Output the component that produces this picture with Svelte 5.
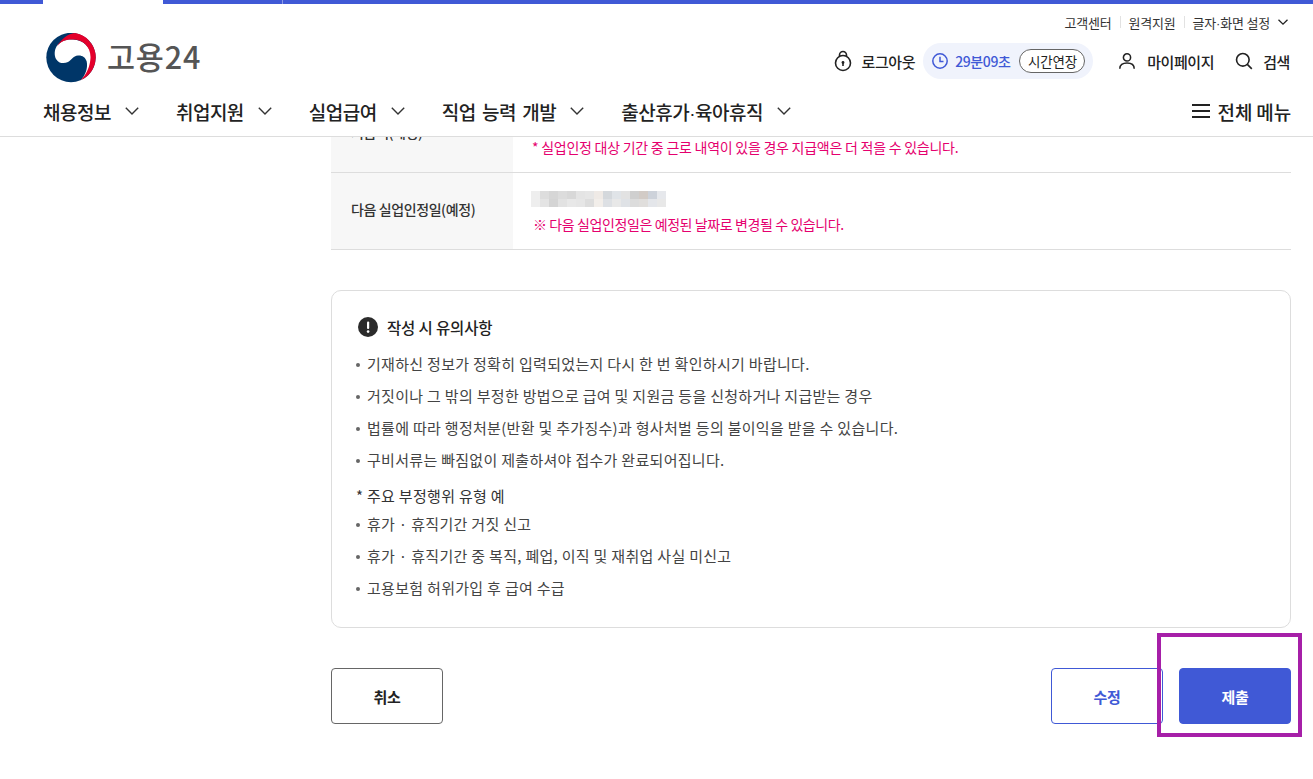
<script lang="ts">
  const gnb = [
    ["채용정보"],
    ["취업지원"],
    ["실업급여"],
    ["직업 능력 개발"],
    ["출산휴가", "육아휴직"],
  ];
  const notes = [
    "기재하신 정보가 정확히 입력되었는지 다시 한 번 확인하시기 바랍니다.",
    "거짓이나 그 밖의 부정한 방법으로 급여 및 지원금 등을 신청하거나 지급받는 경우",
    "법률에 따라 행정처분(반환 및 추가징수)과 형사처벌 등의 불이익을 받을 수 있습니다.",
    "구비서류는 빠짐없이 제출하셔야 접수가 완료되어집니다.",
  ];
  const frauds = [
    "휴가 · 휴직기간 거짓 신고",
    "휴가 · 휴직기간 중 복직, 폐업, 이직 및 재취업 사실 미신고",
    "고용보험 허위가입 후 급여 수급",
  ];
  // blurred date, two rows of mosaic cells
  const blur = [
    "#eee", "#ddd", "#d6d6d6", "#dcdcdc", "#d8d8d8", "#e4e4e4", "#e6e6e6", "#efeae6", "#d4d8dc", "#e0e4e8", "#e2e2e2", "#cfcfcf", "#d2cbc6", "#cdd2da", "#e6e8ec",
    "#eee", "#e4e4e4", "#d4d4d4", "#e2e2e2", "#e8e8e8", "#e6e6e6", "#dddddd", "#f2eeea", "#dde0e4", "#e8e8e8", "#dfe2e6", "#dcdcdc", "#e0dedc", "#e4e6ea", "#e8e8e8",
  ];
</script>

<div class="page">
  <header class="header">
    <div class="topline">
      <span class="seg s1"></span>
      <span class="seg s2"></span>
      <span class="seg s3"></span>
      <span class="seg s4"></span>
    </div>
    <div class="util">
      <a href="#a">고객센터</a>
      <i></i>
      <a href="#a">원격지원</a>
      <i></i>
      <a href="#a">글자<span class="dot">·</span>화면 설정</a>
      <svg width="12" height="12" viewBox="0 0 12 12" fill="none" stroke="#222" stroke-width="1.3"><path d="M1.5 3.8 6 8.2l4.5-4.4" /></svg>
    </div>
    <div class="brand-row">
      <div class="logo">
        <svg width="50" height="50" viewBox="0 0 50 50">
          <circle cx="25" cy="24.500" r="24.700" fill="#003668" />
          <path d="M10.500 13.500C14 8 20 6 27 6.500C37 7 45 14 45.500 24C46 34 41 43 34.700 47.500C39.500 42 42 35 40.700 28.500C39.500 24 35.500 22 32 22.500C27 23 25.500 27 22 29C18 31 12.500 30.500 10 26C8 22 8.500 17 10.500 13.500Z" fill="#fff" />
          <path d="M11 13.500C15 6.500 22 .500 29 .100A24.700 24.700 0 0 1 34.700 47.200C41 41 44 33 44.500 25C45 14 37 6.500 27 6.500C20 6 14.500 8.500 11 13.500Z" fill="#e4002b" />
        </svg>
        <span class="logo-text">고용24</span>
      </div>
      <div class="user-tools">
        <a class="tool logout" href="#a">
          <svg width="18" height="22" viewBox="0 0 18 22" fill="none" stroke="#222" stroke-width="1.600">
            <circle cx="9" cy="13" r="7.500" />
            <path d="M5.500 6.500V5a3.500 3.500 0 0 1 7 0v1.500" />
            <circle cx="9" cy="12.500" r="1.400" fill="#222" stroke="none" />
            <path d="M9 13v3" />
          </svg>
          로그아웃
        </a>
        <div class="session">
          <svg width="18" height="18" viewBox="0 0 18 18" fill="none" stroke="#4059d6" stroke-width="1.500">
            <circle cx="9" cy="9" r="7.200" />
            <path d="M9 4.800V9.500h3.500" />
          </svg>
          <span class="time">29분09초</span>
          <button class="extend">시간연장</button>
        </div>
        <a class="tool mypage" href="#a">
          <svg width="18" height="18" viewBox="0 0 20 20" fill="none" stroke="#222" stroke-width="1.700">
            <circle cx="10" cy="6" r="4" />
            <path d="M2 18.500c0-4 3-6.300 8-6.300s8 2.300 8 6.300" />
          </svg>
          마이페이지
        </a>
        <a class="tool search" href="#a">
          <svg width="18" height="18" viewBox="0 0 20 20" fill="none" stroke="#222" stroke-width="1.800">
            <circle cx="8.700" cy="8.700" r="7" />
            <path d="m13.700 13.700 5 5" />
          </svg>
          검색
        </a>
      </div>
    </div>
    <nav class="gnb">
      <ul>
        {#each gnb as parts}
          <li>
            <span>
              {#each parts as part, i}{#if i > 0}<span class="dot">·</span>{/if}{part}{/each}
            </span>
            <svg width="16" height="16" viewBox="0 0 16 16" fill="none" stroke="#333" stroke-width="1.400"><path d="M1.800 4.800 8 11l6.200-6.200" /></svg>
          </li>
        {/each}
      </ul>
      <a class="allmenu" href="#a">
        <svg width="18" height="14" viewBox="0 0 18 14" fill="#222"><rect y="0" width="18" height="2" /><rect y="6" width="18" height="2" /><rect y="12" width="18" height="2" /></svg>
        전체 메뉴
      </a>
    </nav>
  </header>

  <main class="content">
    <div class="info-table">
      <div class="row row-cut">
        <div class="th">지급액(예정)</div>
        <div class="td"><p class="warn">* 실업인정 대상 기간 중 근로 내역이 있을 경우 지급액은 더 적을 수 있습니다.</p></div>
      </div>
      <div class="row row-next">
        <div class="th">다음 실업인정일(예정)</div>
        <div class="td">
          <div class="mosaic">
            {#each blur as c}
              <span style="background:{c}"></span>
            {/each}
          </div>
          <p class="warn">※ 다음 실업인정일은 예정된 날짜로 변경될 수 있습니다.</p>
        </div>
      </div>
    </div>

    <section class="notice">
      <h3>
        <svg width="20" height="20" viewBox="0 0 20 20">
          <circle cx="10" cy="10" r="10" fill="#2b2b2b" />
          <rect x="9" y="4.500" width="2.200" height="7.500" rx="1" fill="#fff" />
          <circle cx="10.100" cy="14.600" r="1.300" fill="#fff" />
        </svg>
        작성 시 유의사항
      </h3>
      <ul>
        {#each notes as n}
          <li>{n}</li>
        {/each}
      </ul>
      <p class="sub">* 주요 부정행위 유형 예</p>
      <ul class="fraud">
        {#each frauds as n}
          <li>{n}</li>
        {/each}
      </ul>
    </section>

    <div class="actions">
      <button class="btn cancel">취소</button>
      <div class="right">
        <button class="btn edit">수정</button>
        <button class="btn submit">제출</button>
      </div>
    </div>
  </main>

  <div class="highlight"></div>
</div>

<style>
  :global(body) {
    font-family: "Noto Sans CJK KR", "Noto Sans", sans-serif;
    color: #222;
    background: #fff;
  }
  .page {
    position: relative;
    height: 779px;
    overflow: hidden;
  }
  a {
    color: inherit;
    text-decoration: none;
  }
  .dot {
    font-family: "Liberation Sans", sans-serif;
  }
  .header {
    height: 137px;
    box-sizing: border-box;
    border-bottom: 1px solid #ddd;
    position: relative;
    z-index: 2;
    background: #fff;
  }
  .topline {
    display: flex;
    height: 4px;
  }
  .seg {
    display: block;
    background: #4059d6;
  }
  .s1 { width: 43px; }
  .s2 { width: 120px; background: #fff; }
  .s3 { width: 119px; border-right: 1px solid #8c9ae6; }
  .s4 { flex: 1; }
  .util {
    display: flex;
    justify-content: flex-end;
    align-items: center;
    gap: 8px;
    height: 16px;
    margin-top: 10px;
    padding-right: 24px;
    font-size: 13px;
    letter-spacing: -0.2px;
    color: #333;
  }
  .util i {
    width: 1px;
    height: 12px;
    background: #e2e2e2;
  }
  .util svg {
    margin-left: -1px;
  }
  .brand-row {
    display: flex;
    justify-content: space-between;
    align-items: flex-start;
    height: 55px;
    padding: 3px 23px 0 46px;
    box-sizing: border-box;
  }
  .logo {
    display: flex;
    align-items: center;
    gap: 12px;
  }
  .logo-text {
    font-size: 30.500px;
    font-weight: 500;
    line-height: 1;
    color: #555;
    letter-spacing: 0.8px;
    margin-top: -4px;
    margin-left: -1px;
  }
  .user-tools {
    display: flex;
    align-items: center;
    margin-top: 10px;
    font-size: 15px;
    font-weight: 500;
    letter-spacing: -0.4px;
  }
  .tool {
    display: flex;
    align-items: center;
    gap: 10px;
  }
  .logout {
    margin-right: 8px;
  }
  .session {
    display: flex;
    align-items: center;
    width: 170px;
    height: 36px;
    box-sizing: border-box;
    padding: 0 6px 0 8px;
    border-radius: 18px;
    background: #f0f3fc;
  }
  .time {
    margin-left: 6px;
    color: #4059d6;
    font-size: 14px;
    font-weight: 500;
  }
  .extend {
    margin-left: 9px;
    width: 66px;
    height: 24px;
    padding: 0;
    border: 1px solid #666;
    border-radius: 12px;
    background: #fff;
    font: inherit;
    font-size: 13.500px;
    font-weight: 400;
    letter-spacing: -0.2px;
    color: #222;
  }
  .mypage {
    margin-left: 25px;
    gap: 11px;
  }
  .search {
    margin-left: 21px;
  }
  .gnb {
    display: flex;
    justify-content: space-between;
    align-items: center;
    height: 30px;
    margin-top: 11px;
    padding: 0 22px 0 43px;
  }
  .gnb ul {
    display: flex;
    gap: 36px;
    margin: 0;
    padding: 0;
    list-style: none;
  }
  .gnb li {
    display: flex;
    align-items: center;
    gap: 13px;
    font-size: 19px;
    font-weight: 500;
    letter-spacing: -0.5px;
    word-spacing: 2.500px;
    color: #222;
  }
  .allmenu {
    display: flex;
    align-items: center;
    gap: 8px;
    font-size: 19px;
    font-weight: 500;
    letter-spacing: -0.15px;
  }
  .content {
    width: 960px;
    margin-left: 331px;
  }
  .info-table {
    border-bottom: 1px solid #ddd;
  }
  .row {
    display: flex;
  }
  .row-cut {
    height: 35px;
    overflow: hidden;
  }
  .row-next {
    height: 76px;
    border-top: 1px solid #ddd;
  }
  .th {
    width: 182px;
    flex: none;
    box-sizing: border-box;
    padding: 0 0 4px 20px;
    background: #f7f7f7;
    font-size: 14px;
    font-weight: 500;
    letter-spacing: -0.4px;
    color: #333;
    display: flex;
    align-items: center;
  }
  .row-cut .th {
    align-items: flex-start;
    margin-top: -15px;
    height: 50px;
    padding: 0 0 0 20px;
  }
  .td {
    flex: 1;
    padding-left: 19px;
  }
  .warn {
    margin: 0;
    font-size: 14px;
    line-height: 18px;
    letter-spacing: -0.25px;
    color: #e5006e;
  }
  .row-cut .warn {
    margin-top: 1px;
  }
  .mosaic {
    display: grid;
    grid-template-columns: repeat(15, 9px);
    grid-auto-rows: 8px;
    margin: 18px 0 0 -1px;
    width: 135px;
  }
  .mosaic span {
    display: block;
  }
  .row-next .warn {
    margin-top: 8px;
    margin-left: 1px;
    letter-spacing: -0.4px;
  }
  .notice {
    box-sizing: border-box;
    height: 338px;
    margin-top: 40px;
    padding: 25px 24px 0;
    border: 1px solid #ddd;
    border-radius: 10px;
  }
  .notice h3 {
    display: flex;
    align-items: center;
    gap: 9px;
    height: 22px;
    margin: 0 0 10px 2px;
    font-size: 15.500px;
    font-weight: 500;
    letter-spacing: -0.15px;
    color: #222;
  }
  .notice ul {
    margin: 0;
    padding: 0;
    list-style: none;
  }
  .notice li {
    position: relative;
    height: 32px;
    padding-left: 11px;
    font-size: 15px;
    line-height: 32px;
    letter-spacing: 0.3px;
    color: #444;
  }
  .notice li::before {
    content: "";
    position: absolute;
    left: 0;
    top: 15px;
    width: 4px;
    height: 4px;
    border-radius: 50%;
    background: #666;
  }
  .sub {
    margin: 10px 0 0;
    height: 22px;
    font-size: 15px;
    line-height: 20px;
    letter-spacing: 0.3px;
    color: #333;
  }
  .actions {
    display: flex;
    justify-content: space-between;
    margin-top: 40px;
  }
  .right {
    display: flex;
    gap: 16px;
  }
  .btn {
    width: 112px;
    height: 56px;
    padding: 0;
    border-radius: 4px;
    background: #fff;
    font: inherit;
    font-size: 15px;
    font-weight: 700;
    letter-spacing: -0.3px;
  }
  .cancel {
    border: 1px solid #666;
    color: #222;
  }
  .edit {
    border: 1px solid #4059d6;
    color: #4059d6;
  }
  .submit {
    border: 1px solid #4059d6;
    background: #4059d6;
    color: #fff;
  }
  .highlight {
    position: absolute;
    left: 1157px;
    top: 633px;
    width: 145px;
    height: 104px;
    box-sizing: border-box;
    border: 4px solid #a61fa8;
  }
</style>
